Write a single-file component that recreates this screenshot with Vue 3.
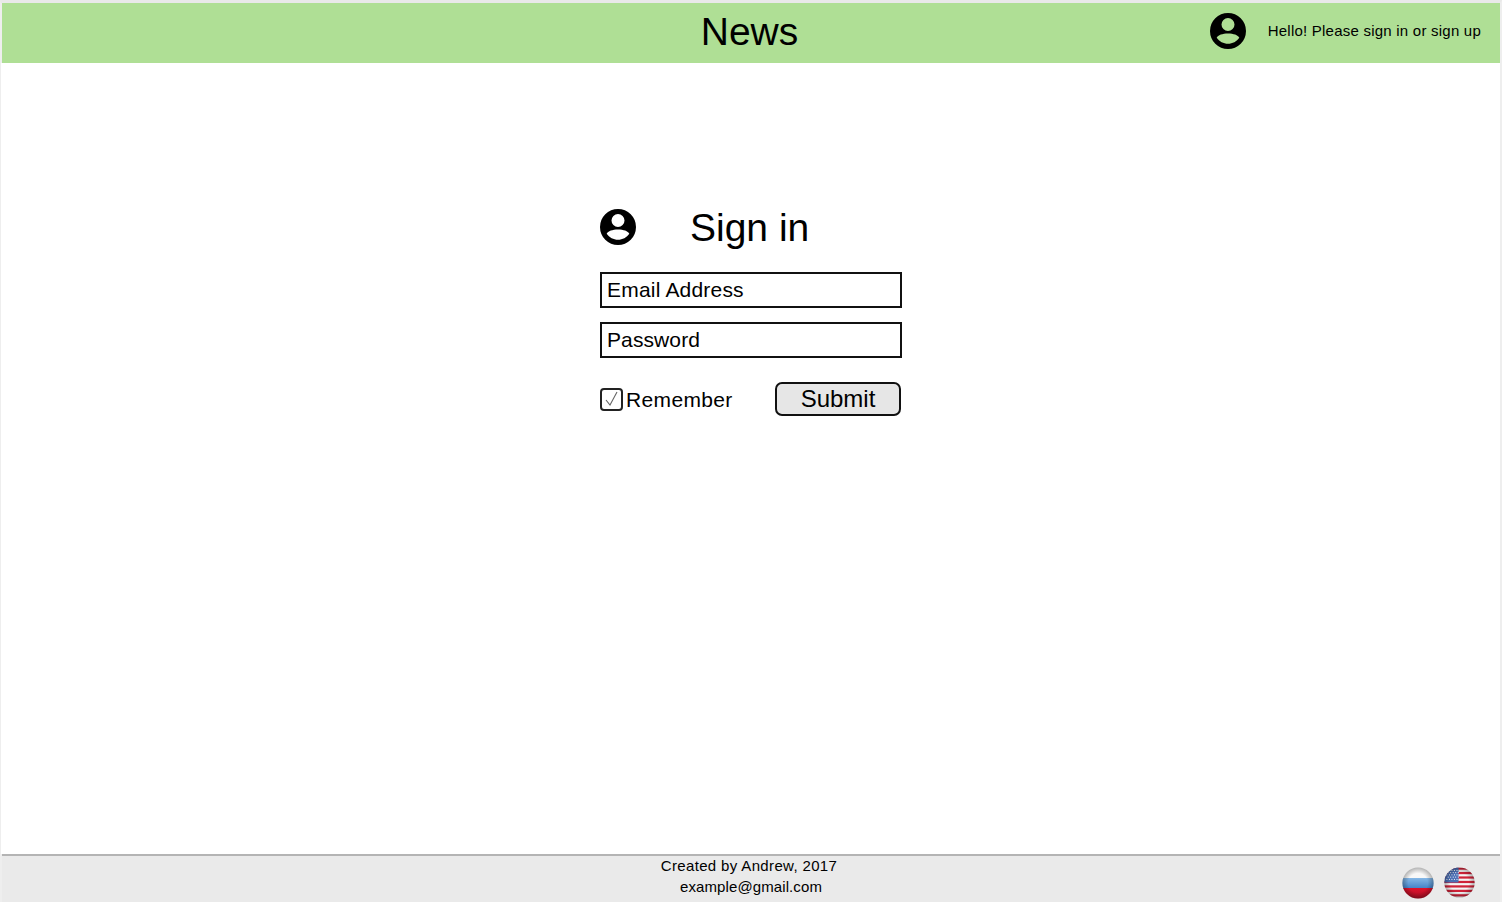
<script setup>
const userPath =
  "M18 0a18 18 0 1 0 0 36a18 18 0 0 0 0-36ZM18 5a6.5 6.5 0 1 1 0 13a6.5 6.5 0 0 1 0-13ZM18 20.5c5.5 0 10 1.6 11.3 4.2c-2.6 3.7-6.8 6-11.3 6s-8.7-2.3-11.3-6c1.3-2.6 5.8-4.2 11.3-4.2Z";

const stripes = [0, 1, 2, 3, 4, 5, 6];
const stars = [];
for (let row = 0; row < 5; row++) {
  for (let col = 0; col < 5; col++) {
    stars.push({ x: 3 + col * 2.6 + (row % 2) * 1.3, y: 3.5 + row * 2.3 });
  }
}
</script>

<template>
  <div class="page">
    <header class="top">
      <h1 class="top__title">News</h1>
      <div class="top__user">
        <svg class="avatar" viewBox="0 0 36 36" aria-label="User">
          <path fill-rule="evenodd" :d="userPath" />
        </svg>
        <p class="top__hello">Hello! Please sign in or sign up</p>
      </div>
    </header>

    <main class="main">
      <form class="form" @submit.prevent>
        <div class="form__head">
          <svg class="avatar" viewBox="0 0 36 36" aria-label="User">
            <path fill-rule="evenodd" :d="userPath" />
          </svg>
          <h2 class="form__title">Sign in</h2>
        </div>
        <input class="form__input" type="text" placeholder="Email Address" />
        <input class="form__input form__input--pass" type="password" placeholder="Password" />
        <div class="form__row">
          <label class="form__remember">
            <span class="form__check">
              <svg viewBox="0 0 19 19" width="19" height="19">
                <path d="M4 10l4 5l7-13" fill="none" stroke="#666" stroke-width="1.1" />
              </svg>
            </span>
            <span class="form__remember-text">Remember</span>
          </label>
          <button class="form__submit" type="submit">Submit</button>
        </div>
      </form>
    </main>

    <footer class="bottom">
      <div class="bottom__text">
        <p class="bottom__created">Created by Andrew, 2017</p>
        <p class="bottom__mail">example@gmail.com</p>
      </div>
      <div class="bottom__flags">
        <svg class="flag" viewBox="0 0 32 32" aria-label="Russian">
          <defs>
            <clipPath id="round"><circle cx="16" cy="16" r="15.6" /></clipPath>
            <radialGradient id="shade" cx="0.5" cy="0.5" r="0.5">
              <stop offset="0.6" stop-color="#000" stop-opacity="0" />
              <stop offset="1" stop-color="#000" stop-opacity="0.3" />
            </radialGradient>
            <linearGradient id="ru-blue" x1="0" y1="0" x2="0" y2="1">
              <stop offset="0" stop-color="#86b8e6" />
              <stop offset="1" stop-color="#3f7fc6" />
            </linearGradient>
            <linearGradient id="ru-red" x1="0" y1="0" x2="0" y2="1">
              <stop offset="0" stop-color="#e0122c" />
              <stop offset="1" stop-color="#a90f25" />
            </linearGradient>
          </defs>
          <g clip-path="url(#round)">
            <rect width="32" height="11" fill="#f8f8f8" />
            <rect y="11" width="32" height="11" fill="url(#ru-blue)" />
            <rect y="21" width="32" height="11" fill="url(#ru-red)" />
            <rect width="32" height="32" fill="url(#shade)" />
          </g>
        </svg>
        <svg class="flag flag--us" viewBox="0 0 32 32" aria-label="English">
          <g clip-path="url(#round)">
            <rect width="32" height="32" fill="#f4f4f4" />
            <rect
              v-for="s in stripes"
              :key="s"
              y="0.5"
              :transform="`translate(0 ${s * 4.6})`"
              width="32"
              height="2.3"
              fill="#cf2238"
            />
            <rect width="15" height="16" fill="#4a6fb5" />
            <circle v-for="(d, i) in stars" :key="i" :cx="d.x" :cy="d.y" r="0.6" fill="#fff" />
            <rect width="32" height="32" fill="url(#shade)" />
          </g>
        </svg>
      </div>
    </footer>
  </div>
</template>

<style>
html,
body {
  margin: 0;
  background: #fff;
}
</style>

<style scoped>
.page {
  box-sizing: border-box;
  display: flex;
  flex-direction: column;
  height: 902px;
  overflow: hidden;
  border-top: 3px solid #e9e9e9;
  border-left: 1px solid #eeeeee;
  border-right: 2px solid #eeeeee;
  font-family: "Liberation Sans", Arial, sans-serif;
  color: #000;
}

.top {
  position: relative;
  display: flex;
  align-items: center;
  justify-content: center;
  flex: none;
  height: 60px;
  margin-left: 1px;
  padding-bottom: 2px;
  box-sizing: border-box;
  background: #afdf95;
  box-shadow: -1px 0 0 #eeeeee;
}

.top__title {
  margin: 0 3px 0 0;
  font-size: 39px;
  font-weight: 400;
}

.top__user {
  position: absolute;
  top: 10px;
  right: 19px;
  display: flex;
  align-items: center;
}

.top__hello {
  margin: -2px 0 0 22px;
  font-size: 15px;
  letter-spacing: 0.23px;
}

.avatar {
  display: block;
  flex: none;
  width: 36px;
  height: 36px;
}

.main {
  flex: 1;
  display: flex;
  justify-content: center;
  padding-top: 146px;
}

.form {
  width: 302px;
  margin-left: 1px;
}

.form__head {
  display: flex;
  align-items: center;
  height: 36px;
  margin-bottom: 27px;
}

.form__title {
  margin: 2px 0 0 54px;
  font-size: 39px;
  font-weight: 400;
  white-space: nowrap;
}

.form__input {
  display: block;
  box-sizing: border-box;
  width: 100%;
  height: 36px;
  margin: 0 0 14px;
  padding: 0 5px;
  border: 2px solid #111;
  border-radius: 0;
  outline: none;
  font: 21px "Liberation Sans", Arial, sans-serif;
  letter-spacing: 0.2px;
  color: #000;
}

.form__input--pass {
  letter-spacing: 0.1px;
}

.form__input::placeholder {
  color: #000;
  opacity: 1;
}

.form__row {
  display: flex;
  align-items: center;
  justify-content: space-between;
  margin-top: 24px;
  padding-right: 1px;
}

.form__remember {
  display: flex;
  align-items: center;
  gap: 3px;
  font-size: 21px;
  letter-spacing: 0.35px;
}

.form__remember-text {
  padding-top: 2px;
}

.form__check {
  box-sizing: border-box;
  display: flex;
  align-items: center;
  justify-content: center;
  width: 23px;
  height: 23px;
  border: 2px solid #222;
  border-radius: 4px;
}

.form__submit {
  box-sizing: border-box;
  width: 126px;
  height: 34px;
  padding: 0;
  border: 2px solid #111;
  border-radius: 7px;
  background: #e6e6e6;
  font: 24px "Liberation Sans", Arial, sans-serif;
  color: #000;
}

.bottom {
  position: relative;
  box-sizing: border-box;
  flex: none;
  height: 48px;
  margin-left: 1px;
  border-top: 2px solid #b4b4b4;
  background: #eaeaea;
  box-shadow: -1px 0 0 #eeeeee;
  text-align: center;
  font-size: 15px;
}

.bottom__text {
  margin-top: -1px;
}

.bottom__created,
.bottom__mail {
  margin: 0;
  line-height: 21px;
}

.bottom__created {
  padding-right: 4px;
  letter-spacing: 0.35px;
}

.bottom__mail {
  letter-spacing: 0.1px;
}

.bottom__flags {
  position: absolute;
  top: 11px;
  right: 25px;
  display: flex;
  align-items: flex-start;
  gap: 10px;
}

.flag {
  display: block;
  width: 32px;
  height: 32px;
}

.flag--us {
  width: 31px;
  height: 31px;
}
</style>
